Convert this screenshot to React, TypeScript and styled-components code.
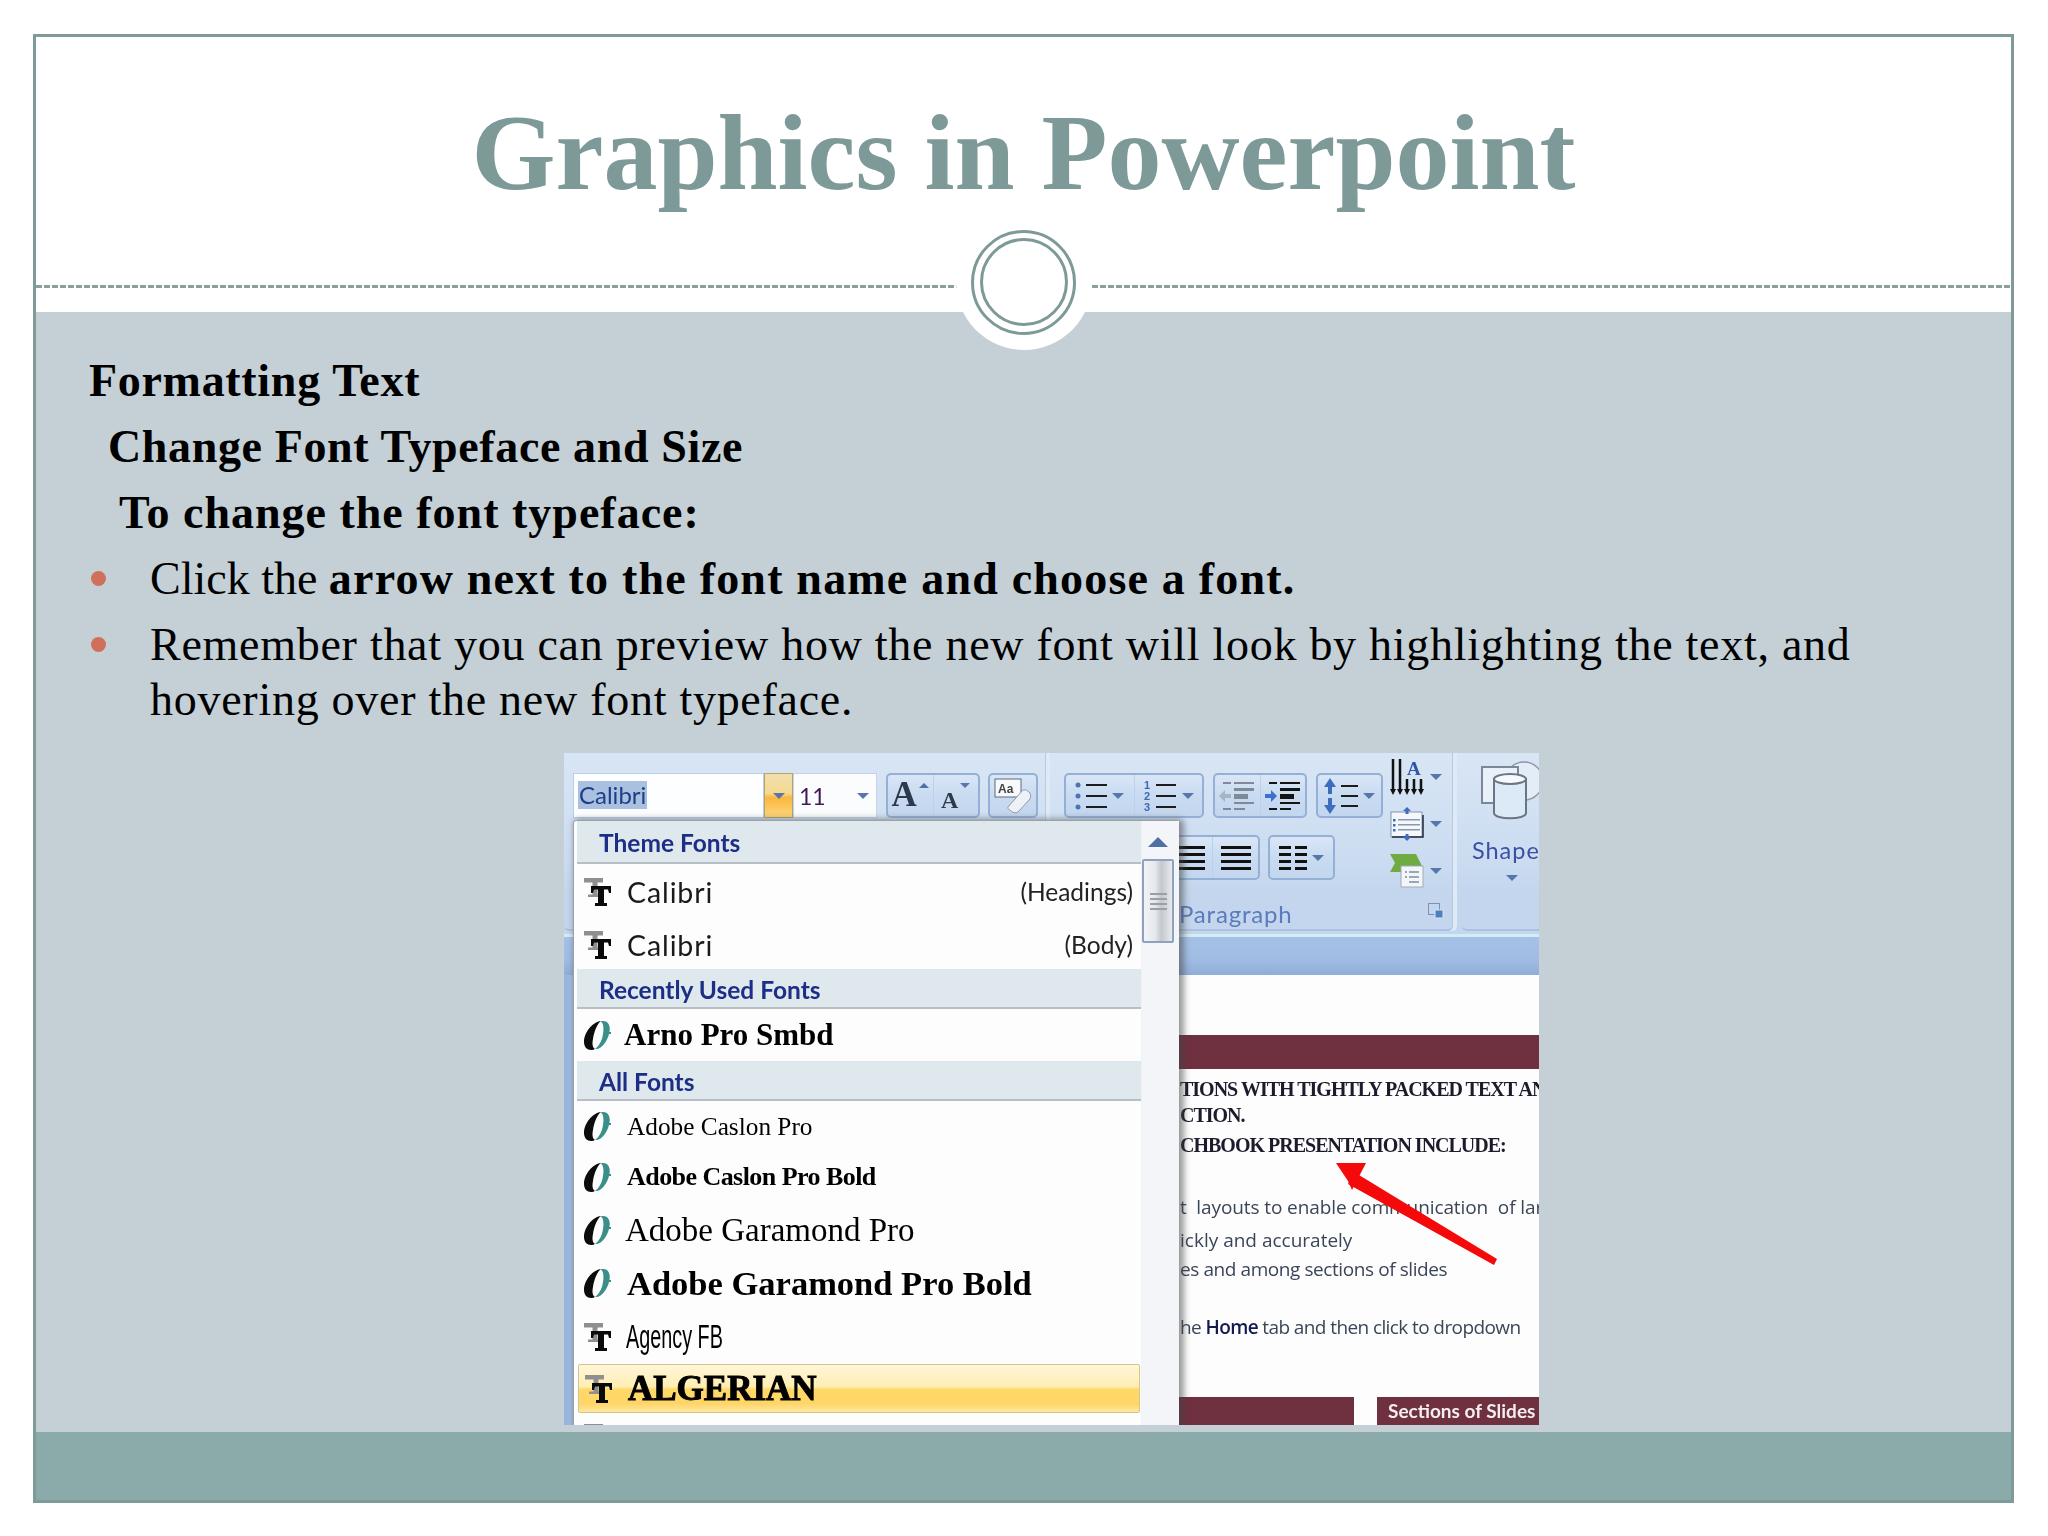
import React from "react";
import styled, { createGlobalStyle, css } from "styled-components";

const Global = createGlobalStyle`
  html, body { margin: 0; padding: 0; background: #fff; }
  #root { width: 2048px; height: 1536px; }
`;

const Page = styled.div`
  box-sizing: border-box; width: 2048px; height: 1536px; padding: 34px 33px;
  background: #fff; font-family: "Liberation Serif", serif;
`;
const Frame = styled.div`
  position: relative; box-sizing: border-box; width: 1981px; height: 1469px;
  border: 3px solid #7f9b99; display: flex; flex-direction: column; overflow: hidden;
`;
const Header = styled.header`
  height: 275px; flex: none; display: flex; flex-direction: column; background: #fff;
`;
const Title = styled.h1`
  margin: 0; height: 248px; flex: none; box-sizing: border-box; padding-top: 54px; text-align: center;
  font-size: 108px; line-height: 124px; font-weight: 700; color: #7d9a98;
`;
const Dashes = styled.div`
  height: 3px;
  background: repeating-linear-gradient(90deg, #8aa09e 0 6px, transparent 6px 8px);
`;
const Medallion = styled.div`
  position: absolute; left: 50%; top: 177px; width: 136px; height: 136px; margin-left: -68px;
  border-radius: 50%; background: #fff; display: flex; align-items: center; justify-content: center;
`;
const Ring = styled.div<{ $size: number }>`
  box-sizing: border-box; width: ${p => p.$size}px; height: ${p => p.$size}px; border-radius: 50%;
  border: 3px solid #7d9a98; display: flex; align-items: center; justify-content: center;
`;
const Body = styled.main`
  flex: 1; min-height: 0; background: #c4d0d6; padding: 41px 0 0 53px; box-sizing: border-box;
  font-size: 46px; line-height: 55px; color: #000;
`;
const Heading = styled.div<{ $indent?: number; $spacing: number }>`
  font-weight: 700; margin: 0 0 11px ${p => p.$indent ?? 0}px; letter-spacing: ${p => p.$spacing}px;
`;
const Bullet = styled.div`
  display: flex; width: 1790px; margin-bottom: 11px;
`;
const Dot = styled.span`
  flex: none; width: 15px; height: 15px; border-radius: 50%; background: #d0705a;
  margin: 20px 44px 0 2px;
`;
const Strong = styled.strong`font-weight: 700; letter-spacing: 1.2px;`;
const Spaced = styled.span`letter-spacing: 0.73px;`;

const Footer = styled.footer`
  height: 68px; flex: none; background: #8babab;
`;

/* ---- embedded screenshot ---- */
const Shot = styled.div`
  position: relative; width: 975px; height: 672px; margin: 26px 0 0 475px; overflow: hidden;
  font-family: Lato, sans-serif; filter: blur(0.45px); background: #fff;
`;
const Ribbon = styled.div`
  display: flex; height: 184px; box-sizing: border-box; width: 1100px;
  background: linear-gradient(#d8e5f4 0, #d2e1f3 30%, #cbdcf1 60%, #c3d6ed 78%, #c3d6ed 100%);
  border-bottom: 3px solid #d4ecf3;
`;
const Group = styled.section<{ $w: number; $pad?: string }>`
  flex: none; width: ${p => p.$w}px; box-sizing: border-box; padding: ${p => p.$pad ?? "20px 0 0 9px"};
  margin-right: 9px; border-right: 1px solid #b4cbe6; border-bottom: 2px solid #a9c2e2;
  border-radius: 0 0 5px 5px; position: relative; display: flex; flex-direction: column; height: 178px;
  box-shadow: 4px 0 0 #dfeaf6;
`;
const Row = styled.div<{ $top?: number; $left?: number; $gap?: number }>`
  display: flex; align-items: stretch; height: 45px;
  margin: ${p => p.$top ?? 0}px 0 0 ${p => p.$left ?? 0}px; gap: ${p => p.$gap ?? 8}px;
`;
const Combo = styled.div`
  width: 191px; box-sizing: border-box; background: #fdfeff; border: 1px solid #b9cde6; padding: 7px 4px;
  font-size: 24px; line-height: 28px; color: #1d3f86;
`;
const Selected = styled.span`
  display: inline-block; background: #aac0e0; padding: 0 1px; height: 28px;
`;
const ComboArrow = styled.div`
  width: 29px; box-sizing: border-box; border: 1px solid #b9a366; display: flex; align-items: center; justify-content: center;
  background: linear-gradient(#f0dfae 0, #f5d98f 45%, #fbb73f 55%, #fdd679 100%);
`;
const SizeBox = styled.div`
  width: 84px; box-sizing: border-box; background: #fbfcfe; border: 1px solid #c3d4ea; padding: 7px 7px 7px 5px;
  font-size: 23px; line-height: 28px; color: #3d1a55; display: flex; justify-content: space-between; align-items: center;
`;
const Caret = styled.span<{ $up?: boolean; $size?: number }>`
  flex: none; display: inline-block; width: 0; height: 0;
  border-left: ${p => p.$size ?? 6}px solid transparent; border-right: ${p => p.$size ?? 6}px solid transparent;
  ${p => p.$up
    ? css`border-bottom: ${p.$size ?? 6}px solid #4f6fa5;`
    : css`border-top: ${p.$size ?? 6}px solid #5676ac;`}
`;
const TopCaret = styled.span`
  align-self: flex-start; margin: 8px 0 0 -3px; display: flex;
`;
const Tools = styled.div<{ $w: number }>`
  width: ${p => p.$w}px; box-sizing: border-box; display: flex; overflow: hidden;
  border: 2px solid #95b0d6; border-radius: 5px;
  background: linear-gradient(#d9e6f6, #c9dbf1 50%, #c2d6ee);
`;
const Tool = styled.div`
  flex: 1; display: flex; align-items: center; justify-content: center; gap: 5px;
  & + & { border-left: 1px solid #bbd0ea; }
`;
const GrowLetter = styled.span<{ $size: number }>`
  font-family: "Liberation Serif", serif; font-weight: 700; color: #2e3a4c; font-size: ${p => p.$size}px; line-height: 1;
  align-self: flex-end; margin-bottom: 4px;
`;
const GroupLabel = styled.div`
  position: absolute; left: 124px; bottom: -3px; font-size: 24px; line-height: 36px; letter-spacing: 0.8px; color: #5c7bbd;
`;
const Launcher = styled.div`
  position: absolute; right: 8px; bottom: 10px;
  display: flex;
`;
const ParaBody = styled.div`display: flex;`;
const ParaLeft = styled.div`width: 326px; flex: none;`;
const ParaRight = styled.div`
  display: flex; flex-direction: column; gap: 7px; margin-top: -16px; width: 52px;
`;
const SideTool = styled.div`
  display: flex; align-items: center; justify-content: space-between; height: 40px;
`;
const ShapeTool = styled.div`
  display: flex; flex-direction: column; align-items: center; height: 100%;
`;
const ShapeLabel = styled.div`
  margin-top: 12px; font-size: 23.5px; line-height: 30px; letter-spacing: 1px; color: #3c4fa5;
`;
const ShapeCaret = styled.div`margin-top: 10px; display: flex;`;

const TabStrip = styled.div`
  height: 38px; background: linear-gradient(#a5c1e7, #a0bce3 60%, #8fadd6);
`;
const Lower = styled.div`display: flex; height: 450px;`;
const Rail = styled.div`width: 9px; flex: none; background: linear-gradient(90deg, #97b3dc, #a5bfe4);`;
const Doc = styled.div`
  flex: 1; min-width: 0; display: flex; flex-direction: column; background: #fdfdfe; overflow: hidden;
`;
const Band = styled.div`height: 34px; margin-top: 60px; flex: none; background: #6f3040;`;
const DocText = styled.div`
  height: 328px; box-sizing: border-box; flex: none; padding: 7px 0 0 607px; overflow: hidden; color: #26304a;
`;
const DocLine = styled.div<{ $top?: number; $serif?: boolean; $spacing?: number }>`
  height: 26px; line-height: 26px; white-space: nowrap; margin-top: ${p => p.$top ?? 0}px;
  ${p => p.$serif
    ? css`font: 700 20px/26px "Liberation Serif", serif; color: #1d1a2c;`
    : css`font: 400 19px/26px "Open Sans", sans-serif; color: #3a4658;`}
  letter-spacing: ${p => p.$spacing ?? 0}px;
`;
const DocBold = styled.b`color: #101a50; font-weight: 600;`;
const BottomBars = styled.div`display: flex; gap: 23px; height: 28px; padding-left: 0;`;
const BottomBar = styled.div<{ $w?: number }>`
  background: #6f3040; color: #f4eef0; font: 700 19px/28px Lato, sans-serif;
  ${p => p.$w ? css`width: ${p.$w}px; flex: none; box-sizing: border-box; padding-left: 11px; white-space: nowrap;` : css`flex: 1;`}
`;
const ArrowOverlay = styled.svg`
  position: absolute; left: 760px; top: 400px; width: 185px; height: 120px;
`;

/* dropdown */
const Dropdown = styled.div`
  position: absolute; left: 9px; top: 67px; width: 606px; height: 640px; box-sizing: border-box;
  display: flex; background: #fdfdfe; padding-left: 3px;
  border: 1px solid #9aa1ab; border-radius: 3px;
  box-shadow: 3px 1px 6px 2px rgba(70, 70, 70, 0.55);
`;
const List = styled.div`width: 564px; flex: none;`;
const Section = styled.div<{ $h: number }>`
  height: ${p => p.$h}px; box-sizing: border-box; padding: 2px 0 0 22px; display: flex; align-items: center;
  background: #dfe8ed; border-bottom: 2px solid #b7bfc4;
  font-size: 24.5px; font-weight: 700; color: #1d2e86;
`;
const FontRow = styled.div<{ $h: number; $active?: boolean }>`
  height: ${p => p.$h}px; box-sizing: border-box; display: flex; align-items: center; padding: 0 8px 0 7px; position: relative;
  ${p => p.$active && css`
    margin: 0 1px; padding-left: 6px; border: 1px solid #d4c48c; border-radius: 2px;
    background: linear-gradient(#fff6d8 0, #ffeeb4 46%, #ffd968 52%, #ffd568 82%, #ffe7a0 100%);
  `}
`;
const nameStyles = {
  calibri: css`font: 400 28.5px/36px Lato, sans-serif; color: #1a1a1a; margin-left: 16px; letter-spacing: .9px;`,
  arno: css`font: 700 31px/36px "Liberation Serif", serif; margin-left: 13px;`,
  caslon: css`font: 400 25.3px/36px "Liberation Serif", serif; margin-left: 16px;`,
  caslonB: css`font: 700 26px/36px "Liberation Serif", serif; margin-left: 16px; letter-spacing: -.55px;`,
  gara: css`font: 400 33px/40px "Liberation Serif", serif; margin-left: 14px;`,
  garaB: css`font: 700 34.5px/40px "Liberation Serif", serif; margin-left: 16px;`,
  agency: css`font: 400 33px/40px "Liberation Sans", sans-serif; margin-left: 15px; transform: scaleX(.6); transform-origin: left center;`,
  alg: css`font: 700 35px/40px "Liberation Serif", serif; margin-left: 16px; -webkit-text-stroke: 1px #000;`,
  arial: css`font: 400 28px/36px "Liberation Sans", sans-serif; margin-left: 15px;`,
};
const FontName = styled.span<{ $v: keyof typeof nameStyles }>`
  color: #000; white-space: nowrap; display: inline-block; ${p => nameStyles[p.$v]}
`;
const RoleLabel = styled.span`
  margin-left: auto; font: 400 24.5px/30px Lato, sans-serif; color: #222;
`;
const ScrollCol = styled.div`
  flex: 1; background: #f4f5f8; display: flex; flex-direction: column; align-items: center;
  border-left: 1px solid #f0f1f4; padding: 16px 5px 0 0;
`;
const Thumb = styled.div`
  width: 32px; height: 84px; box-sizing: border-box; margin-top: 12px; border: 2px solid #8fa2bd; border-radius: 2px;
  background: linear-gradient(90deg, #f1f3f6, #e6e8ec 40%, #c3c8ce 62%, #e8eaee);
  display: flex; flex-direction: column; align-items: center; justify-content: center; gap: 3px;
`;
const Grip = styled.span`width: 17px; height: 2px; background: #9aa0a8;`;

/* ---- icons ---- */
const TT = () => (
  <svg width="27" height="28" viewBox="0 0 27 28" fill="none">
    <path d="M0 0h19v4.500h-5.500v12H17v2.500H4v-2.500h4.500v-12H0z" fill="#8f8f8f" />
    <path d="M7 8h20v7h-2l-1-3.500h-4V25h3v3H11v-3h3V11.500h-4L9 15H7z" fill="#0a0a0a" />
  </svg>
);
const OT = () => (
  <svg width="27" height="31" viewBox="0 0 27 31" fill="none">
    <path d="M17 1C8 2 0 13 0 22c0 5 3 8 7 8 2 0 3-.5 4-1-2.500-1.500-3-5-2-10 1-7 4-15 8-18z" fill="#0c0c0c" />
    <path d="M19 1c-1 0-2 0-2 .5 2.500 2 3 7 2 12.500-1 7-4 12-8 15 6 1 12-7 14-15 2-7 0-13-6-13z" fill="#3a8f8a" />
    <path d="M22 13h5" stroke="#3a8f8a" strokeWidth="2" />
  </svg>
);
const BulletsIcon = () => (
  <svg width="32" height="32" viewBox="0 0 32 32">
    {[5, 16, 27].map(y => (
      <g key={y}><circle cx="3" cy={y} r="2.500" fill="#4e73b5" /><rect x="11" y={y - 1} width="21" height="2" fill="#1c1c1c" /></g>
    ))}
  </svg>
);
const NumbersIcon = () => (
  <svg width="34" height="32" viewBox="0 0 34 32">
    {[5, 16, 27].map((y, i) => (
      <g key={y}>
        <text x="1" y={y + 4} fontFamily="Liberation Sans" fontWeight="700" fontSize="11" fill="#3d68b5">{i + 1}</text>
        <rect x="13" y={y - 1} width="20" height="2" fill="#1c1c1c" />
      </g>
    ))}
  </svg>
);
const IndentIcon = ({ dark }: { dark?: boolean }) => {
  const c = dark ? "#141414" : "#7e8a99";
  return (
    <svg width="36" height="34" viewBox="0 0 36 34">
      <rect x="4" y="3" width="8" height="2" fill={c} /><rect x="15" y="3" width="20" height="2" fill={c} />
      <rect x="15" y="9" width="20" height="3" fill={c} />
      <rect x="15" y="15" width="14" height="5" fill={c} />
      <rect x="15" y="23" width="20" height="2" fill={c} />
      <rect x="4" y="29" width="8" height="2" fill={c} /><rect x="15" y="29" width="11" height="2" fill={c} />
      <path d={dark ? "M0 15h6v-4l6 6-6 6v-4H0z" : "M12 15H6v-4l-6 6 6 6v-4h6z"} fill={dark ? "#3d6fd0" : "#a7b3c6"} />
    </svg>
  );
};
const SpacingIcon = () => (
  <svg width="34" height="36" viewBox="0 0 34 36">
    <path d="M6 0l6 9H8v7H4V9H0zM6 36l6-9H8v-7H4v7H0z" fill="#3e6dc0" />
    <rect x="17" y="7" width="17" height="2" fill="#1c1c1c" /><rect x="17" y="17" width="17" height="2" fill="#1c1c1c" /><rect x="17" y="27" width="17" height="2" fill="#1c1c1c" />
  </svg>
);
const JustifyIcon = ({ w }: { w: number }) => (
  <svg width={w} height="26" viewBox={`0 0 ${w} 26`}>
    {[1, 8, 15, 22].map(y => <rect key={y} x="0" y={y} width={w} height="3" fill="#111" />)}
  </svg>
);
const ColumnsIcon = () => (
  <svg width="28" height="26" viewBox="0 0 28 26">
    {[1, 8, 15, 22].map(y => (
      <g key={y}><rect x="0" y={y} width="12" height="3" fill="#111" /><rect x="16" y={y} width="12" height="3" fill="#111" /></g>
    ))}
  </svg>
);
const TextDirIcon = () => (
  <svg width="34" height="36" viewBox="0 0 34 36">
    <path d="M3 0v30M10 0v30" stroke="#111" strokeWidth="2.500" />
    <path d="M17 20v10M24 20v10M31 20v10" stroke="#111" strokeWidth="2.500" />
    <path d="M0 30h6l-3 6zM7 30h6l-3 6zM14 30h6l-3 6zM21 30h6l-3 6zM28 30h6l-3 6z" fill="#111" />
    <text x="17" y="16" fontFamily="Liberation Serif" fontWeight="700" fontSize="19" fill="#2f55a8">A</text>
  </svg>
);
const AlignTextIcon = () => (
  <svg width="34" height="34" viewBox="0 0 34 34">
    <rect x="1" y="5" width="31" height="25" fill="#f4f7fc" stroke="#8495ad" />
    <path d="M2 30h31V8" stroke="#1f2a3a" strokeWidth="1.500" fill="none" />
    {[12, 17, 22].map(y => <rect key={y} x="8" y={y} width="22" height="1.500" fill="#8a97ad" />)}
    {[12, 17, 22].map(y => <rect key={y} x="3" y={y} width="2.500" height="2.500" fill="#3e6dc0" />)}
    <path d="M17 0l4 4h-2.500v3h-3V4H13zM17 34l4-4h-2.500v-3h-3v3H13z" fill="#3e6dc0" />
  </svg>
);
const SmartArtIcon = () => (
  <svg width="34" height="34" viewBox="0 0 34 34">
    <path d="M0 0h26l6 12-2 6H0l5-9z" fill="#6faa43" />
    <rect x="11" y="12" width="22" height="21" fill="#f2f5f9" stroke="#a1acb8" />
    <path d="M19 18h10M19 23h10M19 28h10M15 18h2M15 23h2" stroke="#7e8fa0" strokeWidth="1.500" />
  </svg>
);
const ShapesIcon = () => (
  <svg width="64" height="62" viewBox="0 0 64 62">
    <circle cx="44" cy="20" r="19" fill="#e4edf7" stroke="#8d99a8" strokeWidth="1.500" />
    <rect x="2" y="6" width="36" height="36" fill="#eaf0f8" stroke="#7c8797" strokeWidth="2" />
    <path d="M14 18v34c0 7 32 7 32 0V18z" fill="#dce9f7" stroke="#6b7684" strokeWidth="2" />
    <ellipse cx="30" cy="18" rx="16" ry="5" fill="#f6f9fd" stroke="#6b7684" strokeWidth="2" />
  </svg>
);
const EraserIcon = () => (
  <svg width="38" height="36" viewBox="0 0 38 36">
    <rect x="1" y="1" width="26" height="18" fill="#f7f9fc" stroke="#5f6b7c" />
    <text x="4" y="15" fontFamily="Liberation Sans" fontWeight="700" fontSize="12" fill="#444">Aa</text>
    <path d="M14 29l14-16c2-2 5-1 7 1s2 5 1 7L24 34c-2 1.500-5 1-7-1s-4-2-3-4z" fill="#eef2f6" stroke="#8d99a8" />
  </svg>
);
const LauncherIcon = () => (
  <svg width="16" height="16" viewBox="0 0 16 16">
    <rect x=".5" y=".5" width="11" height="11" fill="none" stroke="#7d92b2" />
    <rect x="7" y="7" width="8" height="8" fill="#4f7fc0" stroke="#d7e6f6" />
  </svg>
);

type Item =
  | { kind: "head"; h: number; label: string }
  | { kind: "font"; h: number; label: string; v: keyof typeof nameStyles; icon: "t" | "o"; role?: string; active?: boolean };

const items: Item[] = [
  { kind: "head", h: 43, label: "Theme Fonts" },
  { kind: "font", h: 56, label: "Calibri", v: "calibri", icon: "t", role: "(Headings)" },
  { kind: "font", h: 49, label: "Calibri", v: "calibri", icon: "t", role: "(Body)" },
  { kind: "head", h: 40, label: "Recently Used Fonts" },
  { kind: "font", h: 52, label: "Arno Pro Smbd", v: "arno", icon: "o" },
  { kind: "head", h: 40, label: "All Fonts" },
  { kind: "font", h: 50, label: "Adobe Caslon Pro", v: "caslon", icon: "o" },
  { kind: "font", h: 52, label: "Adobe Caslon Pro Bold", v: "caslonB", icon: "o" },
  { kind: "font", h: 54, label: "Adobe Garamond Pro", v: "gara", icon: "o" },
  { kind: "font", h: 52, label: "Adobe Garamond Pro Bold", v: "garaB", icon: "o" },
  { kind: "font", h: 55, label: "Agency FB", v: "agency", icon: "t" },
  { kind: "font", h: 49, label: "ALGERIAN", v: "alg", icon: "t", active: true },
  { kind: "font", h: 50, label: "Arial", v: "arial", icon: "t" },
];

const PowerPointShot = () => (
  <Shot>
    <Ribbon>
      <Group $w={482}>
        <Row $gap={0}>
          <Combo><Selected>Calibri</Selected></Combo>
          <ComboArrow><Caret /></ComboArrow>
          <SizeBox>11<Caret /></SizeBox>
          <Row $left={9} $gap={8}>
            <Tools $w={94}>
              <Tool><GrowLetter $size={35}>A</GrowLetter><TopCaret><Caret $up $size={5} /></TopCaret></Tool>
              <Tool><GrowLetter $size={24}>A</GrowLetter><TopCaret><Caret $size={5} /></TopCaret></Tool>
            </Tools>
            <Tools $w={50}><Tool><EraserIcon /></Tool></Tools>
          </Row>
        </Row>
      </Group>
      <Group $w={398}>
        <ParaBody>
          <ParaLeft>
            <Row $gap={9}>
              <Tools $w={140}>
                <Tool><BulletsIcon /><Caret /></Tool>
                <Tool><NumbersIcon /><Caret /></Tool>
              </Tools>
              <Tools $w={94}>
                <Tool><IndentIcon /></Tool>
                <Tool><IndentIcon dark /></Tool>
              </Tools>
              <Tools $w={67}><Tool><SpacingIcon /><Caret /></Tool></Tools>
            </Row>
            <Row $top={17} $left={56} $gap={8}>
              <Tools $w={140}>
                <Tool><JustifyIcon w={30} /></Tool>
                <Tool><JustifyIcon w={30} /></Tool>
                <Tool><JustifyIcon w={30} /></Tool>
              </Tools>
              <Tools $w={67}><Tool><ColumnsIcon /><Caret /></Tool></Tools>
            </Row>
          </ParaLeft>
          <ParaRight>
            <SideTool><TextDirIcon /><Caret /></SideTool>
            <SideTool><AlignTextIcon /><Caret /></SideTool>
            <SideTool><SmartArtIcon /><Caret /></SideTool>
          </ParaRight>
        </ParaBody>
        <GroupLabel>Paragraph</GroupLabel>
        <Launcher><LauncherIcon /></Launcher>
      </Group>
      <Group $w={100} $pad="8px 0 0 0">
        <ShapeTool>
          <ShapesIcon />
          <ShapeLabel>Shapes</ShapeLabel>
          <ShapeCaret><Caret /></ShapeCaret>
        </ShapeTool>
      </Group>
    </Ribbon>
    <TabStrip />
    <Lower>
      <Rail />
      <Doc>
        <Band />
        <DocText>
          <DocLine $serif $spacing={-1}>TIONS WITH TIGHTLY PACKED TEXT AND</DocLine>
          <DocLine $serif $spacing={-1}>CTION.</DocLine>
          <DocLine $serif $spacing={-1} $top={4}>CHBOOK PRESENTATION INCLUDE:</DocLine>
          <DocLine $top={36} $spacing={-0.1}>t&nbsp; layouts to enable communication&nbsp; of large</DocLine>
          <DocLine $top={7}>ickly and accurately</DocLine>
          <DocLine $top={3} $spacing={-0.42}>es and among sections of slides</DocLine>
          <DocLine $top={32} $spacing={-0.6}>he <DocBold>Home</DocBold> tab and then click to dropdown</DocLine>
        </DocText>
        <BottomBars>
          <BottomBar />
          <BottomBar $w={162}>Sections of Slides</BottomBar>
        </BottomBars>
      </Doc>
    </Lower>
    <ArrowOverlay viewBox="0 0 185 120">
      <path d="M12 10h30L28 37l-4-9z" fill="#f40a0a" />
      <path d="M30 19L173 106l-3 6L24 31z" fill="#f40a0a" />
    </ArrowOverlay>
    <Dropdown>
      <List>
        {items.map((it, i) =>
          it.kind === "head" ? (
            <Section key={i} $h={it.h}>{it.label}</Section>
          ) : (
            <FontRow key={i} $h={it.h} $active={it.active}>
              {it.icon === "t" ? <TT /> : <OT />}
              <FontName $v={it.v}>{it.label}</FontName>
              {it.role && <RoleLabel>{it.role}</RoleLabel>}
            </FontRow>
          )
        )}
      </List>
      <ScrollCol>
        <Caret $up $size={10} />
        <Thumb><Grip /><Grip /><Grip /><Grip /></Thumb>
      </ScrollCol>
    </Dropdown>
  </Shot>
);

export default function App() {
  return (
    <Page>
      <Global />
      <Frame>
        <Header>
          <Title>Graphics in Powerpoint</Title>
          <Dashes />
        </Header>
        <Body>
          <Heading $spacing={0.7}>Formatting Text</Heading>
          <Heading $indent={19} $spacing={0.63}>Change Font Typeface and Size</Heading>
          <Heading $indent={30} $spacing={1}>To change the font typeface:</Heading>
          <Bullet><Dot /><div>Click the <Strong>arrow next to the font name and choose a font.</Strong></div></Bullet>
          <Bullet><Dot /><div><Spaced>Remember that you can preview how the new font will look by highlighting the text, and hovering over the new font typeface.</Spaced></div></Bullet>
          <PowerPointShot />
        </Body>
        <Footer />
        <Medallion><Ring $size={105}><Ring $size={88} /></Ring></Medallion>
      </Frame>
    </Page>
  );
}
